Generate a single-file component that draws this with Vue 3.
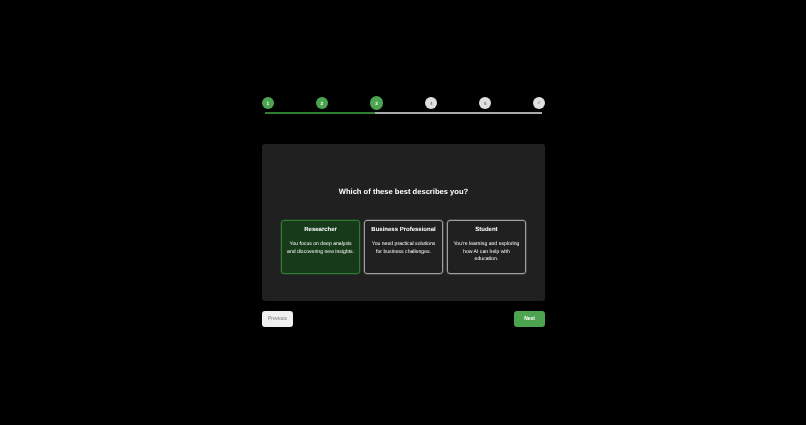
<script setup>
const steps = ['1', '2', '3', '4', '5', '✓']
const current = 3

const options = [
  { title: 'Researcher', text: 'You focus on deep analysis and discovering new insights.' },
  { title: 'Business Professional', text: 'You need practical solutions for business challenges.' },
  { title: 'Student', text: "You're learning and exploring how AI can help with education." },
]
const selected = 'Researcher'
</script>

<template>
  <div class="page">
    <div class="wizard">
      <div class="stepper">
        <div class="dots">
          <div
            v-for="(step, i) in steps"
            :key="step"
            class="dot"
            :class="{ done: i < current, current: i === current - 1 }"
          >{{ step }}</div>
        </div>
        <div class="track"><div class="fill"></div></div>
      </div>

      <div class="card">
        <h2>Which of these best describes you?</h2>
        <div class="options">
          <div
            v-for="opt in options"
            :key="opt.title"
            class="option"
            :class="{ selected: opt.title === selected }"
          >
            <h3>{{ opt.title }}</h3>
            <p>{{ opt.text }}</p>
          </div>
        </div>
      </div>

      <div class="nav">
        <button class="prev">Previous</button>
        <button class="next">Next</button>
      </div>
    </div>
  </div>
</template>

<style>
html, body {
  margin: 0;
  background: #000;
}
</style>

<style scoped>
.page {
  width: 806px;
  height: 425px;
  background: #000;
  font-family: "Liberation Sans", Arial, sans-serif;
  text-rendering: geometricPrecision;
  display: flex;
  justify-content: center;
  align-items: flex-start;
  padding-top: 96px;
  box-sizing: border-box;
}
.wizard {
  width: 283.5px;
  margin-left: 1px;
  filter: blur(0.35px);
}
.stepper {
  margin-bottom: 30px;
}
.dots {
  display: flex;
  justify-content: space-between;
  align-items: center;
  height: 14px;
}
.dot {
  width: 12px;
  height: 12px;
  border-radius: 50%;
  background: #e0e0e0;
  color: #777;
  font-size: 4.6px;
  font-weight: bold;
  display: flex;
  align-items: center;
  justify-content: center;
}
.dot.done {
  background: #4ca350;
  color: #fff;
}
.dot.current {
  width: 13.5px;
  height: 13.5px;
}
.track {
  height: 2px;
  margin: 2px 3px 0;
  background: #aaa;
}
.fill {
  width: 39.8%;
  height: 100%;
  background: #2e7d32;
}
.card {
  height: 157px;
  background: #202020;
  border-radius: 3px;
  padding: 0 19.5px;
  box-sizing: border-box;
}
h2 {
  margin: 0;
  padding-top: 42px;
  color: #fff;
  font-size: 7.6px;
  line-height: 11px;
  font-weight: bold;
  text-align: center;
}
.options {
  display: flex;
  gap: 4.25px;
  margin-top: 22.5px;
}
.option {
  flex: 1 1 0;
  min-width: 0;
  height: 54.5px;
  box-sizing: border-box;
  border: 1px solid #a0a0a0;
  box-shadow: 0 0 0 0.5px rgba(160, 160, 160, 0.5);
  border-radius: 3px;
  padding: 5px 4px;
  text-align: center;
  color: #fff;
}
.option.selected {
  background: #173a1a;
  border-color: #2e7d32;
  box-shadow: 0 0 0 0.5px rgba(46, 125, 50, 0.5);
}
h3 {
  margin: 0 0 6.5px;
  font-size: 6px;
  line-height: 9px;
  font-weight: bold;
  white-space: nowrap;
}
p {
  margin: 0;
  font-size: 5.14px;
  line-height: 7.65px;
  color: #fff;
}
.nav {
  display: flex;
  justify-content: space-between;
  margin-top: 10px;
}
button {
  width: 31.5px;
  height: 15.5px;
  border: none;
  border-radius: 3px;
  padding: 0;
  font-family: inherit;
  font-size: 4.9px;
}
.prev {
  background: #f0f0f0;
  color: #777;
}
.next {
  background: #4ca350;
  color: #fff;
  font-weight: bold;
}
</style>
